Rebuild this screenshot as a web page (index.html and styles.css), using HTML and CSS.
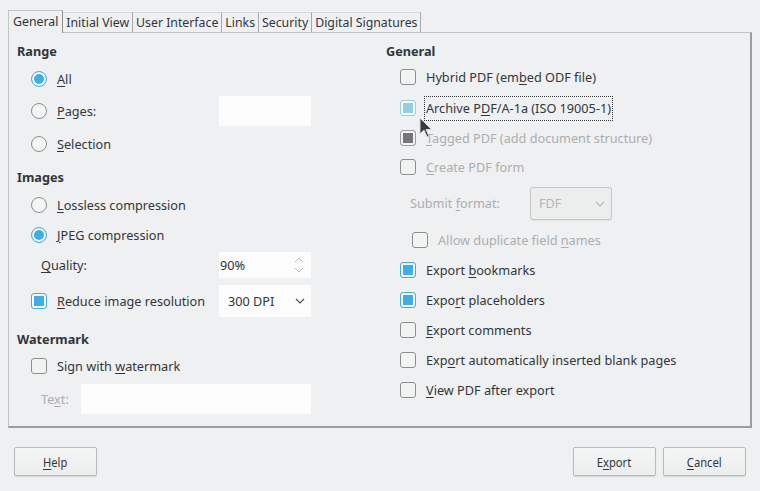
FILE: index.html
```html
<!DOCTYPE html>
<html>
<head>
<meta charset="utf-8">
<link rel="stylesheet" href="styles.css">
</head>
<body>
<div class="dialog">
  <div class="tabs">
    <div class="tab active">General</div>
    <div class="tab">Initial View</div>
    <div class="tab">User Interface</div>
    <div class="tab">Links</div>
    <div class="tab">Security</div>
    <div class="tab">Digital Signatures</div>
  </div>
  <div class="panel">
    <div class="col left">
      <div class="row head">Range</div>
      <div class="row item"><span class="radio checked"></span><span class="lbl"><u>A</u>ll</span></div>
      <div class="row item"><span class="radio"></span><span class="lbl"><u>P</u>ages:</span><span class="field"></span></div>
      <div class="row item"><span class="radio"></span><span class="lbl"><u>S</u>election</span></div>
      <div class="row head">Images</div>
      <div class="row item"><span class="radio"></span><span class="lbl"><u>L</u>ossless compression</span></div>
      <div class="row item"><span class="radio checked"></span><span class="lbl"><u>J</u>PEG compression</span></div>
      <div class="row item sub"><span class="lbl"><u>Q</u>uality:</span>
        <span class="field spin">90%
          <svg class="spinarrows" width="12" height="18" viewBox="0 0 12 18"><polyline points="2,6 6,2 10,6" fill="none" stroke="#b9bbbd" stroke-width="1"/><polyline points="2,12 6,16 10,12" fill="none" stroke="#b9bbbd" stroke-width="1"/></svg>
        </span></div>
      <div class="row item"><span class="check checked"></span><span class="lbl"><u>R</u>educe image resolution</span>
        <span class="field combo">300 DPI
          <svg class="chev" width="12" height="8" viewBox="0 0 12 8"><polyline points="2,2 6,6 10,2" fill="none" stroke="#4d5257" stroke-width="1.2"/></svg>
        </span></div>
      <div class="row head">Watermark</div>
      <div class="row item"><span class="check"></span><span class="lbl">Sign with <u>w</u>atermark</span></div>
      <div class="row item sub"><span class="lbl dis">Te<u>x</u>t:</span><span class="field wide"></span></div>
    </div>
    <div class="col right">
      <div class="row head">General</div>
      <div class="row item"><span class="check"></span><span class="lbl">Hybrid PDF (em<u>b</u>ed ODF file)</span></div>
      <div class="row item"><span class="check light"></span><span class="lbl focus">Archive P<u>D</u>F/A-1a (ISO 19005-1)</span></div>
      <div class="row item"><span class="check grey"></span><span class="lbl dis"><u>T</u>agged PDF (add document structure)</span></div>
      <div class="row item"><span class="check"></span><span class="lbl dis"><u>C</u>reate PDF form</span></div>
      <div class="row item sub2"><span class="lbl dis fmt">Submit <u>f</u>ormat:</span>
        <span class="dcombo">FDF
          <svg class="chev" width="12" height="8" viewBox="0 0 12 8"><polyline points="2,2 6,6 10,2" fill="none" stroke="#b4b6b8" stroke-width="1.2"/></svg>
        </span></div>
      <div class="row item sub3"><span class="check"></span><span class="lbl dis">Allow duplicate field <u>n</u>ames</span></div>
      <div class="row item"><span class="check checked"></span><span class="lbl">Export <u>b</u>ookmarks</span></div>
      <div class="row item"><span class="check checked"></span><span class="lbl">Expo<u>r</u>t placeholders</span></div>
      <div class="row item"><span class="check"></span><span class="lbl"><u>E</u>xport comments</span></div>
      <div class="row item"><span class="check"></span><span class="lbl">Exp<u>o</u>rt automatically inserted blank pages</span></div>
      <div class="row item"><span class="check"></span><span class="lbl"><u>V</u>iew PDF after export</span></div>
    </div>
    <svg class="cursor" width="14" height="22" viewBox="0 0 14 22"><path d="M1,1 L1,17 L5,13 L8,20 L10,19 L7,12.5 L12.5,12.5 Z" fill="#3a3d40" stroke="#d8d9da" stroke-width="1" stroke-linejoin="round"/></svg>
  </div>
  <div class="buttons">
    <button class="btn"><span class="bt"><u>H</u>elp</span></button>
    <div class="spacer"></div>
    <button class="btn"><span class="bt">E<u>x</u>port</span></button>
    <button class="btn"><span class="bt"><u>C</u>ancel</span></button>
  </div>
</div>
</body>
</html>
```
FILE: styles.css
```css
* { box-sizing: border-box; }
html, body { margin: 0; padding: 0; }
body {
  background: #eff0f1;
  font-family: "Noto Sans", "DejaVu Sans", sans-serif;
  font-size: 12.7px;
  color: #31363b;
  width: 760px;
  height: 491px;
  overflow: hidden;
}
u { text-decoration: underline; text-underline-offset: 2px; text-decoration-thickness: 1px; }
.dialog { padding: 10px 8px 0 8px; }
.tabs { display: flex; height: 22px; align-items: flex-end; position: relative; z-index: 2; font-size: 12.3px; }
.tab {
  height: 20px;
  padding: 0 3px;
  line-height: 19px;
  border-top: 1px solid #d6d7d8;
  border-right: 1px solid #a7a8a9;
  background: #eff0f1;
  white-space: nowrap;
}
.tab.active {
  height: 23px;
  margin-bottom: -1px;
  padding: 0 4px 0 4px;
  line-height: 21px;
  border: 1px solid #c4c5c6;
  border-bottom: none;
  border-right: 1px solid #8f9091;
}
.panel {
  position: relative;
  width: 744px;
  height: 396px;
  border: 1px solid #c2c3c4;
  border-right: 2px solid #9c9d9e;
  border-bottom: 2px solid #9c9d9e;
  display: grid;
  grid-template-columns: 294px 1fr;
  column-gap: 75px;
  padding: 8px 8px 0 8px;
}
.col { display: grid; }
.left { grid-template-rows: 20px 35px 30px 36px 30px 26px 33px 28px 43px 34px 20px 46px; }
.right { grid-template-rows: 20px 32px 30px 30px 28px 44px 30px 30px 30px 30px 30px 30px; }
.row { display: flex; align-items: center; white-space: nowrap; }
.head { font-weight: bold; }
.item { padding-left: 14px; }
.item.sub { padding-left: 24px; }
.item.sub2 { padding-left: 24px; }
.item.sub3 { padding-left: 26px; }
.lbl { margin-left: 10px; }
.sub .lbl, .sub2 .lbl { margin-left: 0; }
.dis { color: #acaeb0; }
.radio {
  width: 16px; height: 16px; border-radius: 50%;
  border: 1px solid #8c8e90;
  background: #f4f5f5;
  flex: none;
}
.radio.checked {
  border: 1px solid #3daee9;
  background: #fcfcfc;
  box-shadow: inset 0 0 0 2px #fcfcfc, inset 0 0 0 8px #3daee9;
}
.check {
  width: 16px; height: 16px; border-radius: 3px;
  border: 1px solid #8c8e90;
  background: #f1f2f2;
  flex: none;
}
.check.checked {
  border-color: #3daee9;
  background: #fcfcfc;
  box-shadow: inset 0 0 0 2px #fcfcfc, inset 0 0 0 8px #3daee9;
}
.check.light {
  border-color: #93cee9;
  background: #fcfcfc;
  box-shadow: inset 0 0 0 2px #fcfcfc, inset 0 0 0 8px #93cee9;
}
.check.grey {
  border-color: #9a9c9e;
  background: #f4f4f4;
  box-shadow: inset 0 0 0 2px #f4f4f4, inset 0 0 0 8px #75777a;
}
.field {
  margin-left: auto;
  width: 92px; height: 30px;
  background: #fcfcfc;
  flex: none;
  display: flex; align-items: center;
  position: relative;
}
.field.wide { width: 230px; }
.spin { height: 26px; padding-left: 1px; }
.spinarrows { position: absolute; right: 6px; top: 4px; }
.combo { height: 32px; padding-left: 9px; }
.combo .chev { position: absolute; right: 5px; top: 12px; }
.focus { outline: 1px dotted #31363b; outline-offset: 0; padding: 2px 1px 3px 1px; margin-left: 9px; }
.fmt { width: 120px; }
.dcombo {
  position: relative;
  width: 82px; height: 33px;
  border: 1px solid #c6c7c8;
  border-radius: 3px;
  background: #eceded;
  color: #b4b6b8;
  display: flex; align-items: center;
  padding-left: 8px;
  box-shadow: 0 1px 0 #e0e1e2;
}
.dcombo .chev { position: absolute; right: 5px; top: 12px; }
.cursor { position: absolute; left: 410px; top: 84px; }
.buttons { display: flex; padding: 19px 6px 0 6px; gap: 7px; }
.spacer { flex: 1; }
.btn {
  width: 83px; height: 29px;
  border: 1px solid #b9babb;
  border-radius: 2px;
  background: linear-gradient(#f4f5f5, #eceded);
  box-shadow: 0 1px 1px rgba(0,0,0,0.12);
  font-family: "Noto Sans", "DejaVu Sans", sans-serif;
  font-size: 13px;
  color: #31363b;
  padding: 0;
  display: flex; align-items: center; justify-content: center;
}
.bt { display: inline-block; transform: scaleX(0.86); }
```
